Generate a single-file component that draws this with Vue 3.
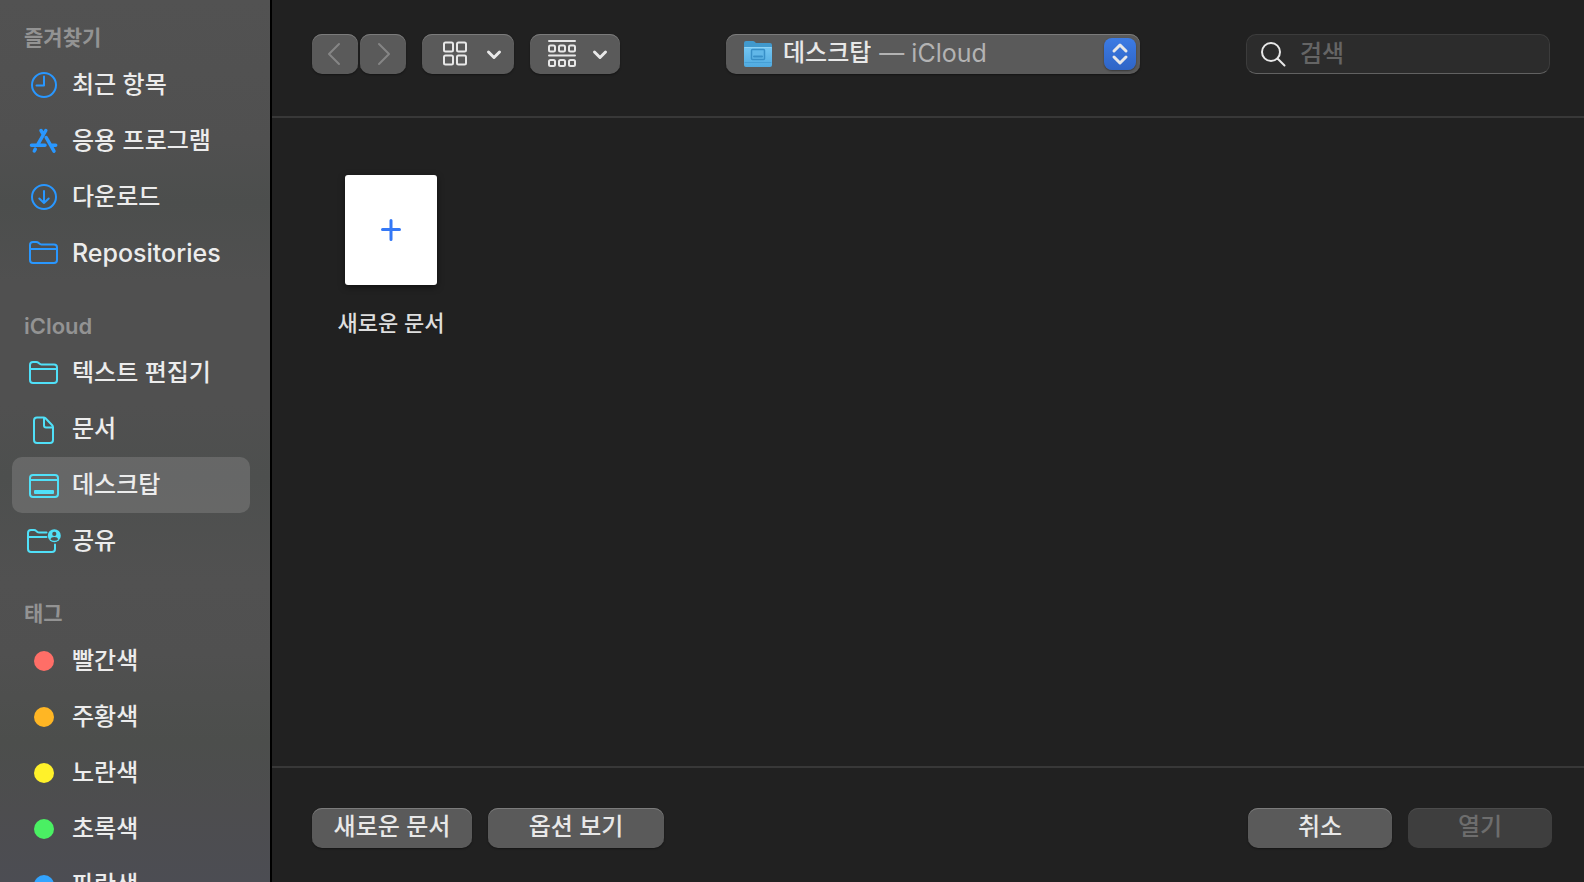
<template>
    <div class="open-dialog">
        <aside class="sidebar">
            <nav v-for="section in sections" :key="section.title" class="sidebar-section">
                <h2 class="section-title" :class="{ 'latin-title': section.latin }">{{ section.title }}</h2>
                <ul class="section-list">
                    <li v-for="item in section.items" :key="item.name">
                        <button
                            type="button"
                            class="sidebar-item"
                            :class="[section.tone, { active: item.name === selectedPlace }]"
                            @click="selectedPlace = item.name"
                        >
                            <svg class="item-icon" viewBox="0 0 36 32" aria-hidden="true">
                                <g v-if="item.icon === 'clock'">
                                    <circle cx="18" cy="16" r="12" />
                                    <path d="M18 7.5v9h-7.5" />
                                </g>
                                <g v-else-if="item.icon === 'apps'" class="thick">
                                    <path d="M19.8 5.5L11.6 19.8M15 5.5l2.4 4M5.5 20.3h13.5M25.5 20.3h4.2M20.2 12.5l7.8 13.7M9.3 24.2l-1 1.8" />
                                </g>
                                <g v-else-if="item.icon === 'download'">
                                    <circle cx="18" cy="16" r="12" />
                                    <path d="M18 10v12M13.3 17.5L18 22l4.7-4.5" />
                                </g>
                                <g v-else-if="item.icon === 'folder'">
                                    <path d="M4 8q0-3 3-3h3.3q1.2 0 2.1.8l.9.8q.9.8 2.1.8H28q3 0 3 3V23q0 3-3 3H7q-3 0-3-3zM4 12h27" />
                                </g>
                                <g v-else-if="item.icon === 'document'">
                                    <path d="M11 4.500h6.500q1.200 0 2 .8l6.700 6.900q.8.8.8 2V27q0 3-3 3H11q-3 0-3-3V7.500q0-3 3-3zM18 5v7.500q0 2 2 2h6.800" />
                                </g>
                                <g v-else-if="item.icon === 'desktop'">
                                    <rect x="4" y="6" width="28" height="22" rx="3" />
                                    <path d="M4 11h28" />
                                    <rect class="solid" x="8" y="21" width="20" height="4" rx="1" />
                                </g>
                                <g v-else-if="item.icon === 'shared'">
                                    <path d="M20.500 7.500H13.200q-1.200 0-2.100-.8l-.9-.8Q9.300 5 8.100 5H5Q2 5 2 8v16q0 3 3 3h21q3 0 3-3v-4.500M2 12h18.500" />
                                    <circle class="solid" cx="28.300" cy="10.700" r="6.500" />
                                    <circle class="person" cx="28.300" cy="8.900" r="2.100" />
                                    <path class="person" d="M24.300 14.200q.8-2.200 4-2.200t4 2.200q-1.600 1.500-4 1.500t-4-1.500z" />
                                </g>
                                <circle v-else :class="['tag', item.icon]" cx="18" cy="16" r="10" />
                            </svg>
                            <span :class="{ latin: item.latin }">{{ item.name }}</span>
                        </button>
                    </li>
                </ul>
            </nav>
        </aside>

        <main class="browser">
            <header class="toolbar">
                <div class="toolbar-left">
                    <div class="nav-buttons">
                        <button type="button" class="control nav-btn" aria-label="뒤로" disabled>
                            <svg width="16" height="24" viewBox="0 0 16 24"><path d="M12 2L2 12l10 10" /></svg>
                        </button>
                        <button type="button" class="control nav-btn" aria-label="앞으로" disabled>
                            <svg width="16" height="24" viewBox="0 0 16 24"><path d="M4 2l10 10L4 22" /></svg>
                        </button>
                    </div>
                    <button type="button" class="control menu-btn view-btn" aria-label="보기" aria-haspopup="menu">
                        <svg width="28" height="28" viewBox="0 0 28 28">
                            <rect x="2" y="2.500" width="9" height="9" rx="1.500" />
                            <rect x="15" y="2.500" width="9" height="9" rx="1.500" />
                            <rect x="2" y="15.500" width="9" height="9" rx="1.500" />
                            <rect x="15" y="15.500" width="9" height="9" rx="1.500" />
                        </svg>
                        <svg class="chevron" width="16" height="12" viewBox="0 0 16 12"><path d="M2.500 4L8 9.500 13.500 4" /></svg>
                    </button>
                    <button type="button" class="control menu-btn group-btn" aria-label="그룹" aria-haspopup="menu">
                        <svg width="28" height="28" viewBox="0 0 28 28">
                            <path d="M1 1h26M1 15.500h26" />
                            <rect v-for="x in [1, 11, 21]" :key="'a' + x" :x="x" y="5.500" width="6" height="6" rx="1.500" />
                            <rect v-for="x in [1, 11, 21]" :key="'b' + x" :x="x" y="20" width="6" height="6" rx="1.500" />
                        </svg>
                        <svg class="chevron" width="16" height="12" viewBox="0 0 16 12"><path d="M2.500 4L8 9.500 13.500 4" /></svg>
                    </button>
                </div>

                <div class="control location">
                    <svg class="location-icon" width="30" height="28" viewBox="0 0 30 28" aria-hidden="true">
                        <defs>
                            <linearGradient id="folderFront" x1="0" y1="0" x2="0" y2="1">
                                <stop offset="0" stop-color="#74c6f2" />
                                <stop offset="1" stop-color="#50aae0" />
                            </linearGradient>
                        </defs>
                        <path d="M1 3q0-2 2-2h7q1 0 1.700.7L13 3h14q2 0 2 2v8H1z" fill="#4199cd" />
                        <path d="M1 7h28v18q0 2-2 2H3q-2 0-2-2z" fill="url(#folderFront)" />
                        <path class="folder-light" d="M2 7.500h26" />
                        <path class="folder-fold" d="M2 22.500h26" />
                        <rect x="8.500" y="9.500" width="13" height="10" rx="1" fill="#61b7e8" stroke="#388fc7" stroke-width="1.500" />
                        <path d="M11 16.500h8" stroke="#388fc7" stroke-width="2" />
                    </svg>
                    <select v-model="location" class="location-select" aria-label="위치">
                        <option>데스크탑</option>
                    </select>
                    <span class="location-service latin">— iCloud</span>
                    <span class="stepper">
                        <svg width="20" height="28" viewBox="0 0 20 28" aria-hidden="true"><path d="M4 11l6-6 6 6M4 17l6 6 6-6" /></svg>
                    </span>
                </div>

                <label class="search">
                    <svg width="28" height="28" viewBox="0 0 28 28" aria-hidden="true">
                        <circle cx="11" cy="12" r="9" />
                        <path d="M17.500 18.500l7 7" />
                    </svg>
                    <input v-model="query" type="text" placeholder="검색" aria-label="검색" />
                </label>
            </header>

            <section class="file-grid">
                <button type="button" class="file-item">
                    <span class="file-thumb">
                        <svg width="20" height="22" viewBox="0 0 20 22" aria-hidden="true"><path d="M10 1.500v19M1.500 10.500h17" /></svg>
                    </span>
                    <span class="file-name">새로운 문서</span>
                </button>
            </section>

            <footer class="actions">
                <button type="button" class="control action-btn new-btn">새로운 문서</button>
                <button type="button" class="control action-btn options-btn">옵션 보기</button>
                <div class="spacer"></div>
                <button type="button" class="control action-btn">취소</button>
                <button type="button" class="control action-btn" disabled>열기</button>
            </footer>
        </main>
    </div>
</template>

<script setup>
import { ref } from 'vue'

const sections = [
    {
        title: '즐겨찾기',
        tone: 'blue-tone',
        items: [
            { name: '최근 항목', icon: 'clock' },
            { name: '응용 프로그램', icon: 'apps' },
            { name: '다운로드', icon: 'download' },
            { name: 'Repositories', icon: 'folder', latin: true }
        ]
    },
    {
        title: 'iCloud',
        tone: 'cyan-tone',
        latin: true,
        items: [
            { name: '텍스트 편집기', icon: 'folder' },
            { name: '문서', icon: 'document' },
            { name: '데스크탑', icon: 'desktop' },
            { name: '공유', icon: 'shared' }
        ]
    },
    {
        title: '태그',
        tone: 'tag-tone',
        items: [
            { name: '빨간색', icon: 'red' },
            { name: '주황색', icon: 'orange' },
            { name: '노란색', icon: 'yellow' },
            { name: '초록색', icon: 'green' },
            { name: '파란색', icon: 'blue' }
        ]
    }
]

const selectedPlace = ref('데스크탑')
const location = ref('데스크탑')
const query = ref('')
</script>

<style>
body {
    margin: 0;
    background: #212121;
}
</style>

<style scoped>
.open-dialog {
    display: flex;
    height: 100vh;
    background: #212121;
    color: #e8e8e8;
    font-family: Inter, "Noto Sans CJK KR", sans-serif;
    font-size: 24px;
    font-weight: 500;
    line-height: 32px;
}

button,
input,
select {
    font: inherit;
    color: inherit;
}

svg {
    flex-shrink: 0;
    fill: none;
    stroke: currentColor;
    stroke-width: 2;
    stroke-linecap: round;
    stroke-linejoin: round;
}

/* Latin glyphs run a little smaller than Hangul */
.latin {
    font-size: 25px;
}

/* ===== Sidebar ===== */
.sidebar {
    box-sizing: border-box;
    width: 272px;
    flex-shrink: 0;
    padding: 19px 20px 0 12px;
    border-right: 2px solid #000;
    background: linear-gradient(#525252 0%, #505050 16%, #4c4e4d 23%, #505050 32%, #505050 46%, #4d4f4e 54%, #515151 66%, #505050 74%, #4c4e4c 84%, #4d4d4f 92%, #4c4d53 100%);
    overflow-y: auto;
    scrollbar-width: none;
}

.sidebar-section + .sidebar-section {
    margin-top: 26px;
}

.section-title {
    margin: 0;
    padding-left: 12px;
    font-size: 21px;
    font-weight: 600;
    line-height: 38px;
    color: #939393;
}

.latin-title {
    font-size: 22px;
}

.section-list {
    list-style: none;
    margin: 0;
    padding: 0;
}

.sidebar-item {
    display: flex;
    align-items: center;
    gap: 10px;
    width: 100%;
    height: 56px;
    padding: 0 14px;
    border: none;
    border-radius: 10px;
    background: none;
    color: #ececec;
    text-align: left;
    white-space: nowrap;
}

.sidebar-item.active {
    background: rgba(255, 255, 255, 0.14);
}

.item-icon {
    width: 36px;
    height: 32px;
}

.blue-tone .item-icon,
.blue-tone.sidebar-item .item-icon {
    color: #2997ff;
}

.cyan-tone .item-icon {
    color: #50e0f8;
}

.thick {
    stroke-width: 3.5;
}

.solid {
    fill: currentColor;
    stroke: none;
}

.person {
    fill: #505050;
    stroke: none;
}

.tag {
    stroke: none;
}

.tag.red { fill: #ff6e67; }
.tag.orange { fill: #ffb624; }
.tag.yellow { fill: #fff12a; }
.tag.green { fill: #4af063; }
.tag.blue { fill: #33a4ff; }

/* ===== Toolbar ===== */
.browser {
    flex: 1;
    min-width: 0;
    display: flex;
    flex-direction: column;
}

.toolbar {
    display: flex;
    justify-content: space-between;
    padding: 34px 34px 42px 40px;
    border-bottom: 2px solid #383838;
}

.toolbar-left {
    display: flex;
    gap: 16px;
}

.nav-buttons {
    display: flex;
    gap: 2px;
}

.control {
    display: flex;
    align-items: center;
    justify-content: center;
    box-sizing: border-box;
    height: 40px;
    padding: 0;
    border: none;
    border-radius: 10px;
    background: #5a5a5a;
    box-shadow: inset 0 1px 0 #7b7b7b, 0 1px 2px rgba(0, 0, 0, 0.4);
}

.nav-btn {
    width: 46px;
    color: #858585;
}

.menu-btn {
    justify-content: flex-end;
    gap: 16px;
    padding-right: 12px;
}

.view-btn {
    width: 92px;
}

.group-btn {
    width: 90px;
}

.chevron {
    stroke-width: 3;
}

.location {
    justify-content: flex-start;
    width: 414px;
    padding: 0 4px 0 17px;
}

.location-icon {
    margin-right: 10px;
    stroke: none;
}

.folder-light {
    stroke: #8ed3f6;
    stroke-width: 1;
}

.folder-fold {
    stroke: #469fd5;
    stroke-width: 1;
}

.location-select {
    appearance: none;
    field-sizing: content;
    margin: 0;
    padding: 0 0 2px;
    border: none;
    background: none;
    outline: none;
}

.location-service {
    padding: 0 0 2px 8px;
    color: #b3b3b3;
    font-weight: 400;
}

.stepper {
    display: flex;
    align-items: center;
    justify-content: center;
    width: 32px;
    height: 32px;
    margin-left: auto;
    border-radius: 8px;
    background: linear-gradient(#3c7be4, #2f65c6);
    box-shadow: 0 1px 2px rgba(0, 0, 0, 0.4);
}

.stepper svg {
    stroke-width: 3;
}

.search {
    display: flex;
    align-items: center;
    gap: 12px;
    box-sizing: border-box;
    width: 304px;
    height: 40px;
    padding: 0 13px;
    border: 1px solid #3c3c3c;
    border-bottom-color: #626262;
    border-radius: 10px;
    background: #2c2c2c;
}

.search input {
    flex: 1;
    min-width: 0;
    padding: 0;
    border: none;
    background: none;
    outline: none;
}

.search input::placeholder {
    color: #656565;
    opacity: 1;
}

/* ===== Files ===== */
.file-grid {
    flex: 1;
    padding: 57px 40px;
}

.file-item {
    display: flex;
    flex-direction: column;
    align-items: center;
    gap: 22px;
    width: 158px;
    padding: 0;
    border: none;
    background: none;
}

.file-thumb {
    display: flex;
    align-items: center;
    justify-content: center;
    width: 92px;
    height: 110px;
    border-radius: 3px;
    background: #fff;
    color: #3478f6;
    box-shadow: 0 2px 6px rgba(0, 0, 0, 0.5);
}

.file-thumb svg {
    stroke-width: 3;
}

.file-name {
    font-size: 22px;
    color: #dedede;
}

/* ===== Footer ===== */
.actions {
    display: flex;
    gap: 16px;
    padding: 40px 32px 34px 40px;
    border-top: 2px solid #383838;
}

.spacer {
    flex: 1;
}

.action-btn {
    width: 144px;
    padding-bottom: 2px;
}

.new-btn {
    width: 160px;
}

.options-btn {
    width: 176px;
}

.action-btn:disabled {
    background: #3e3e3e;
    box-shadow: inset 0 1px 0 #4c4c4c;
    color: #6d6d6d;
}
</style>
